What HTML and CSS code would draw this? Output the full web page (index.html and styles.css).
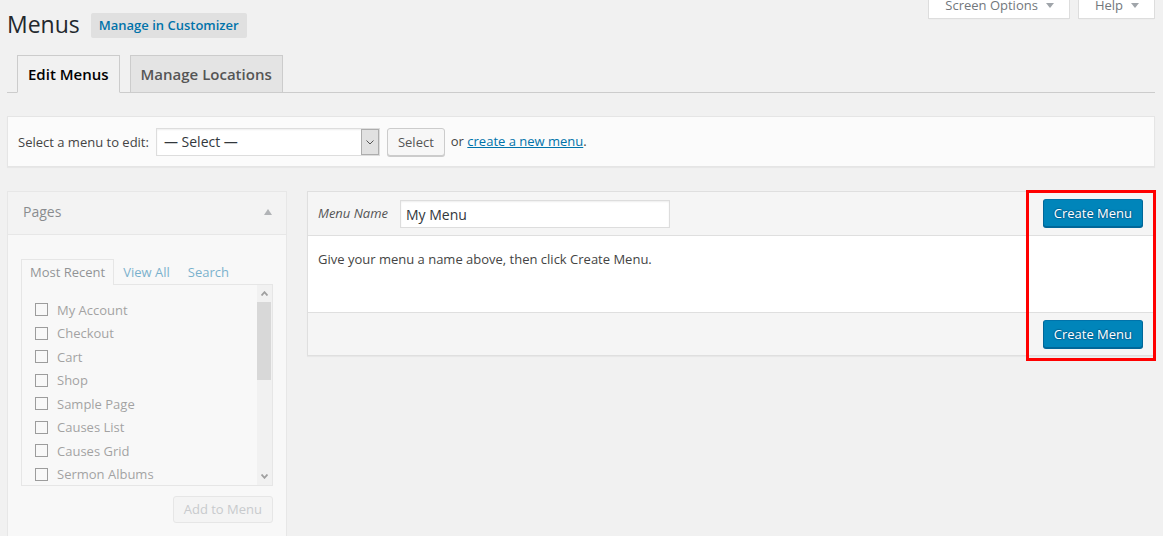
FILE: index.html
```html
<!DOCTYPE html>
<html>
<head>
<meta charset="utf-8">
<title>Menus</title>
<link rel="stylesheet" href="styles.css">
</head>
<body>
<div class="wrap">
  <div class="topbar">
    <div class="title-row">
      <h1 class="page-title">Menus</h1>
      <a class="title-action">Manage in Customizer</a>
    </div>
    <div class="screen-meta">
      <a class="meta-link">Screen Options<span class="meta-arrow"></span></a>
      <a class="meta-link">Help<span class="meta-arrow"></span></a>
    </div>
  </div>

  <nav class="nav-tabs">
    <a class="nav-tab active">Edit Menus</a>
    <a class="nav-tab">Manage Locations</a>
  </nav>

  <div class="manage-menus">
    <span class="mm-label">Select a menu to edit:</span>
    <div class="fake-select">
      <span class="fs-value">— Select —</span>
      <span class="fs-arrow"><svg width="8" height="5" viewBox="0 0 8 5"><polyline points="0.5,0.5 4,4 7.5,0.5" fill="none" stroke="#555" stroke-width="1"/></svg></span>
    </div>
    <button class="btn">Select</button>
    <span class="mm-or">or <a class="link">create a new menu</a>.</span>
  </div>

  <div class="columns">
    <div class="postbox">
      <div class="pb-head">
        <h3 class="pb-title">Pages</h3>
        <span class="pb-toggle"></span>
      </div>
      <div class="pb-body">
        <ul class="inner-tabs">
          <li class="inner-tab active">Most Recent</li>
          <li class="inner-tab">View All</li>
          <li class="inner-tab">Search</li>
        </ul>
        <div class="tabs-panel">
          <ul class="checklist">
            <li><span class="cb"></span>My Account</li>
            <li><span class="cb"></span>Checkout</li>
            <li><span class="cb"></span>Cart</li>
            <li><span class="cb"></span>Shop</li>
            <li><span class="cb"></span>Sample Page</li>
            <li><span class="cb"></span>Causes List</li>
            <li><span class="cb"></span>Causes Grid</li>
            <li><span class="cb"></span>Sermon Albums</li>
          </ul>
          <div class="fake-scroll">
            <span class="sb-btn"><svg width="7" height="5" viewBox="0 0 7 5"><polyline points="0.5,4.5 3.5,1.2 6.5,4.5" fill="none" stroke="#505050" stroke-width="1.8"/></svg></span>
            <span class="sb-thumb"></span>
            <span class="sb-space"></span>
            <span class="sb-btn"><svg width="7" height="5" viewBox="0 0 7 5"><polyline points="0.5,0.5 3.5,3.8 6.5,0.5" fill="none" stroke="#505050" stroke-width="1.8"/></svg></span>
          </div>
        </div>
        <div class="pb-actions">
          <button class="btn btn-disabled">Add to Menu</button>
        </div>
      </div>
    </div>

    <div class="menu-edit">
      <div class="me-head">
        <label class="me-label">Menu Name</label>
        <input class="me-input" type="text" value="My Menu">
        <button class="btn-primary">Create Menu</button>
      </div>
      <div class="me-body">Give your menu a name above, then click Create Menu.</div>
      <div class="me-foot">
        <button class="btn-primary">Create Menu</button>
      </div>
    </div>
  </div>
</div>
<div class="highlight"></div>
</body>
</html>
```

FILE: styles.css
```css
html { overflow: hidden; }
body {
  margin: 0;
  background: #f1f1f1;
  font-family: "Open Sans", "Liberation Sans", sans-serif;
  font-size: 13px;
  color: #444;
}
.wrap { padding: 0 8px 0 7px; }

.topbar { display: flex; justify-content: space-between; align-items: flex-start; }
.title-row { display: flex; align-items: flex-start; }
.page-title {
  margin: 0;
  padding: 10px 0 4px;
  font-size: 23px;
  font-weight: 400;
  line-height: 29px;
  color: #23282d;
}
.title-action {
  margin: 13px 0 0 11px;
  padding: 0 8px;
  height: 25px;
  line-height: 25px;
  background: #e0e0e0;
  border-radius: 2px;
  color: #0073aa;
  font-weight: 600;
  font-size: 13px;
}

.screen-meta { display: flex; gap: 8px; }
.meta-link {
  display: flex;
  align-items: flex-start;
  margin-top: -4px;
  padding: 0 15px 3px 16px;
  line-height: 19px;
  background: #fff;
  border: 1px solid #ddd;
  border-top: 0;
  box-shadow: 0 1px 1px -1px rgba(0,0,0,.1);
  color: #72777c;
  font-size: 13px;
}
.meta-arrow {
  width: 0; height: 0;
  border-left: 4px solid transparent;
  border-right: 4px solid transparent;
  border-top: 5px solid #a0a5aa;
  margin: 7px 0 0 8px;
}

.nav-tabs {
  display: flex;
  align-items: flex-end;
  gap: 10px;
  margin-top: 12px;
  padding-left: 10px;
  border-bottom: 1px solid #ccc;
}
.nav-tab {
  margin-bottom: -1px;
  padding: 6px 10px;
  border: 1px solid #ccc;
  background: #e4e4e4;
  color: #555;
  font-size: 15px;
  font-weight: 600;
  line-height: 24px;
}
.nav-tab.active { background: #f1f1f1; color: #000; border-bottom-color: #f1f1f1; }

.manage-menus {
  display: flex;
  align-items: center;
  margin-top: 23px;
  padding: 11px 10px 10px;
  background: #fbfbfb;
  border: 1px solid #e5e5e5;
  box-shadow: 0 1px 1px rgba(0,0,0,.04);
}
.mm-label { margin-right: 7px; color: #444; }
.fake-select {
  display: flex;
  width: 224px;
  height: 28px;
  box-sizing: border-box;
  border: 1px solid #ddd;
  background: #fff;
  box-shadow: inset 0 1px 2px rgba(0,0,0,.07);
}
.fs-value { flex: 1; padding-left: 7px; font-size: 14px; line-height: 26px; color: #32373c; }
.fs-arrow {
  width: 18px;
  box-sizing: border-box;
  background: #e1e1e1;
  border: 1px solid #adadad;
  display: flex;
  align-items: center;
  justify-content: center;
}
.btn {
  margin: 0 0 0 7px;
  height: 28px;
  padding: 0 10px;
  font-family: "Open Sans", "Liberation Sans", sans-serif;
  font-size: 13px;
  line-height: 26px;
  color: #555;
  background: #f7f7f7;
  border: 1px solid #ccc;
  border-radius: 3px;
  box-shadow: 0 1px 0 #ccc;
}
.mm-or { margin: -3px 0 0 6px; }
.link { color: #0073aa; text-decoration: underline; }

.columns { display: flex; gap: 20px; align-items: flex-start; margin-top: 24px; }

.postbox {
  width: 280px;
  flex: none;
  box-sizing: border-box;
  border: 1px solid #dfdfdf;
  background: #fff;
  opacity: .5;
}
.pb-head {
  display: flex;
  justify-content: space-between;
  align-items: flex-start;
  padding: 9px 14px 12px 15px;
  background: #f5f5f5;
  border-bottom: 1px solid #dfdfdf;
}
.pb-title { margin: 0; font-size: 14px; font-weight: 400; line-height: 21px; color: #23282d; }
.pb-toggle {
  width: 0; height: 0;
  border-left: 4px solid transparent;
  border-right: 4px solid transparent;
  border-bottom: 6px solid #72777c;
  margin-top: 8px;
}
.pb-body { padding: 24px 13px 13px; }
.inner-tabs {
  list-style: none;
  margin: 0;
  padding: 0;
  display: flex;
  align-items: flex-end;
}
.inner-tab {
  position: relative;
  margin-bottom: -1px;
  padding: 2px 8px;
  line-height: 21px;
  border: 1px solid transparent;
  border-bottom: 0;
  color: #0073aa;
}
.inner-tab.active { border-color: #dcdcdc; background: #fff; color: #32373c; }
.tabs-panel {
  display: flex;
  height: 202px;
  box-sizing: border-box;
  border: 1px solid #dcdcdc;
  background: #fff;
  overflow: hidden;
}
.checklist { flex: 1; list-style: none; margin: 0; padding: 13px 0 0 13px; }
.checklist li { display: flex; align-items: center; height: 23.5px; color: #555; }
.cb {
  flex: none;
  width: 13px;
  height: 13px;
  box-sizing: border-box;
  border: 1px solid #4a4a4a;
  background: #fff;
  margin-right: 9px;
}
.fake-scroll { width: 15px; flex: none; background: #f1f1f1; display: flex; flex-direction: column; }
.sb-btn { height: 17px; display: flex; align-items: center; justify-content: center; }
.sb-thumb { height: 78px; background: #c1c1c1; margin-right: 1px; }
.sb-space { flex: 1; }
.pb-actions { display: flex; justify-content: flex-end; margin-top: 10px; }
.btn-disabled {
  margin: 0;
  height: 27px;
  line-height: 25px;
  color: #a0a5aa;
  background: #f7f7f7;
  border-color: #ddd;
  box-shadow: none;
}

.menu-edit {
  flex: 1;
  border: 1px solid #dfdfdf;
  background: #fff;
  box-shadow: 0 1px 1px rgba(0,0,0,.04);
}
.me-head {
  display: flex;
  align-items: center;
  padding: 7px 11px 8px 10px;
  background: #f5f5f5;
  border-bottom: 1px solid #dfdfdf;
}
.me-label { font-style: italic; font-size: 13px; color: #555; margin-right: 12px; }
.me-input {
  width: 270px;
  height: 28px;
  box-sizing: border-box;
  margin: 1px 0 -1px;
  border: 1px solid #ddd;
  padding: 0 5px;
  font-family: "Open Sans", "Liberation Sans", sans-serif;
  font-size: 14px;
  color: #32373c;
  background: #fff;
  box-shadow: inset 0 1px 2px rgba(0,0,0,.07);
  outline: none;
}
.btn-primary {
  margin: 0 0 0 auto;
  height: 28px;
  padding: 0 10px;
  font-family: "Open Sans", "Liberation Sans", sans-serif;
  font-size: 13px;
  line-height: 26px;
  color: #fff;
  background: #0085ba;
  border: 1px solid;
  border-color: #0073aa #006799 #006799;
  border-radius: 3px;
  box-shadow: 0 1px 0 #006799;
  text-shadow: 0 -1px 1px #006799, 1px 0 1px #006799, 0 1px 1px #006799, -1px 0 1px #006799;
}
.me-body {
  height: 76px;
  box-sizing: border-box;
  padding: 14px 10px 12px;
  line-height: 19px;
  color: #444;
}
.me-foot {
  display: flex;
  justify-content: flex-end;
  padding: 7px 11px;
  background: #f5f5f5;
  border-top: 1px solid #dfdfdf;
}

.highlight {
  position: absolute;
  left: 1026px;
  top: 190px;
  width: 130px;
  height: 171px;
  box-sizing: border-box;
  border: 3px solid #f00;
}
```
